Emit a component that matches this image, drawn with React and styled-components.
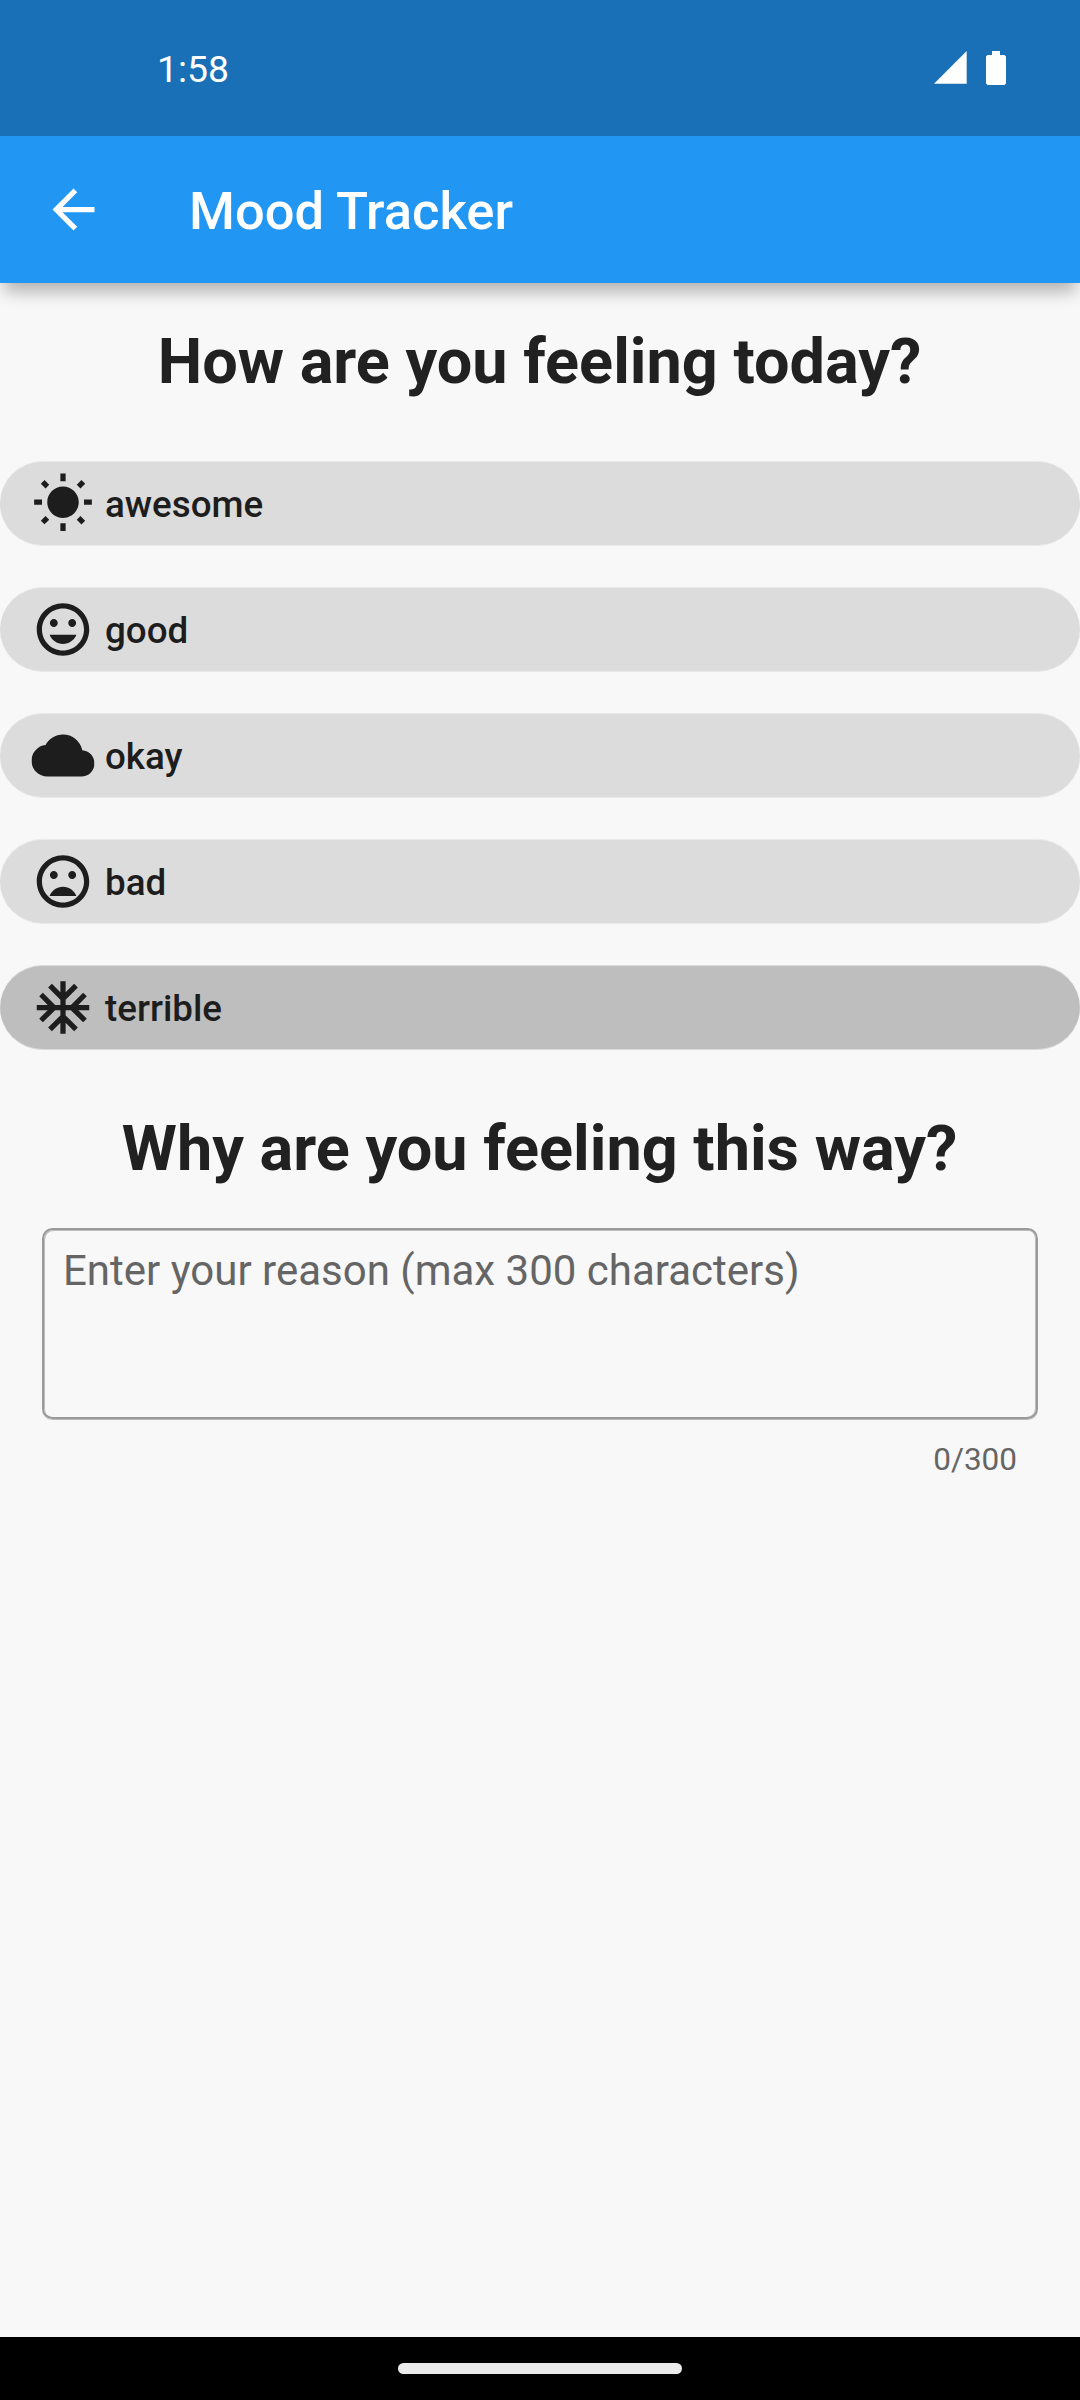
import React, { useState } from "react";
import styled, { createGlobalStyle } from "styled-components";
import {
  MdArrowBack,
  MdWbSunny,
  MdMood,
  MdCloud,
  MdMoodBad,
  MdAcUnit,
} from "react-icons/md";

const GlobalStyle = createGlobalStyle`
  * { box-sizing: border-box; }
  body { margin: 0; background: #f8f8f8; }
`;

const Screen = styled.div`
  display: flex;
  flex-direction: column;
  width: 1080px;
  height: 2400px;
  overflow: hidden;
  background: #f8f8f8;
  color: #212121;
  font-family: Roboto, "Liberation Sans", sans-serif;
`;

const StatusBar = styled.div`
  display: flex;
  flex: none;
  align-items: center;
  justify-content: space-between;
  height: 136px;
  padding: 0 74px 0 157px;
  background: #1970b6;
  color: #fff;
`;

const Clock = styled.span`
  padding-top: 1px;
  font-size: 37.3px;
  line-height: 44px;
`;

const StatusIcons = styled.div`
  display: flex;
  gap: 19px;
`;

const AppBar = styled.header`
  display: flex;
  flex: none;
  align-items: center;
  height: 147px;
  padding-left: 42px;
  gap: 84px;
  background: #2196f3;
  color: #fff;
  z-index: 1;
  box-shadow: 0 13px 16px -4px rgba(0, 0, 0, 0.28);
`;

const BackButton = styled.button`
  display: flex;
  padding: 0;
  border: 0;
  background: none;
  color: inherit;
`;

const Title = styled.h1`
  margin: 0;
  padding-top: 3px;
  font-size: 52.5px;
  font-weight: 500;
  line-height: 62px;
`;

const Content = styled.main`
  display: flex;
  flex: 1;
  flex-direction: column;
  padding-top: 42px;
`;

const Question = styled.h2`
  margin: 0;
  padding-right: 1px;
  font-size: 63px;
  font-weight: 700;
  line-height: 74px;
  text-align: center;
`;

const MoodList = styled.div`
  display: flex;
  flex-direction: column;
  gap: 41px;
  padding: 62px 0;
`;

const MoodChip = styled.button`
  display: flex;
  align-items: center;
  gap: 11px;
  height: 85px;
  padding: 0 31px;
  border: 0 solid ${(p) => (p.$selected ? "#dadada" : "#e9e9e9")};
  border-width: 1px 0;
  border-radius: 42.5px;
  background: ${(p) => (p.$selected ? "#bebebe" : "#dcdcdc")};
  color: #1d1d1d;
  font-family: inherit;
  font-size: 36.75px;
  font-weight: 500;
  line-height: 44px;
  text-align: left;

  svg {
    transform: translateX(0.5px);
  }
`;

const ChipLabel = styled.span`
  padding-top: 2px;
`;

const ReasonForm = styled.div`
  display: flex;
  flex-direction: column;
  padding: 42px 42px 0;
`;

const ReasonInput = styled.textarea`
  height: 191px;
  padding: 16px 19px;
  border: 2px solid #9a9a9a;
  border-radius: 10.5px;
  outline: 0;
  resize: none;
  background: transparent;
  box-shadow: inset 1px 1px 0 #bcbcbc, inset -1px 0 0 #bcbcbc, 0 1px 0 #bcbcbc;
  color: #212121;
  font-family: inherit;
  font-size: 42px;
  line-height: 50px;

  &::placeholder {
    color: #656565;
    opacity: 1;
  }
`;

const Counter = styled.span`
  align-self: flex-end;
  padding: 22px 21px 0 0;
  color: #656565;
  font-size: 31.5px;
  line-height: 38px;
`;

const NavigationBar = styled.div`
  display: flex;
  flex: none;
  align-items: center;
  justify-content: center;
  height: 63px;
  background: #000;
`;

const HomeHandle = styled.div`
  width: 284px;
  height: 11px;
  border-radius: 5.5px;
  background: #ebebeb;
`;

const SignalIcon = () => (
  <svg width="33" height="34" viewBox="0 0 33 34" fill="#fff">
    <path d="M0 32.7 L32.7 0 V32.7 Z" />
  </svg>
);

const BatteryIcon = () => (
  <svg width="20" height="34" viewBox="0 0 20 34" fill="#fff">
    <path d="M6 0 H14 V4 H18.5 L20 5.5 V32.5 L18.5 34 H1.5 L0 32.5 V5.5 L1.5 4 H6 Z" />
  </svg>
);

const MAX_LENGTH = 300;

const moods = [
  { label: "awesome", Icon: MdWbSunny },
  { label: "good", Icon: MdMood },
  { label: "okay", Icon: MdCloud },
  { label: "bad", Icon: MdMoodBad },
  { label: "terrible", Icon: MdAcUnit },
];

export default function App() {
  const [mood, setMood] = useState("terrible");
  const [reason, setReason] = useState("");

  return (
    <Screen>
      <GlobalStyle />
      <StatusBar>
        <Clock>1:58</Clock>
        <StatusIcons>
          <SignalIcon />
          <BatteryIcon />
        </StatusIcons>
      </StatusBar>
      <AppBar>
        <BackButton aria-label="Back">
          <MdArrowBack size={63} />
        </BackButton>
        <Title>Mood Tracker</Title>
      </AppBar>
      <Content>
        <Question>How are you feeling today?</Question>
        <MoodList>
          {moods.map(({ label, Icon }) => (
            <MoodChip
              key={label}
              $selected={label === mood}
              onClick={() => setMood(label)}
            >
              <Icon size={63} />
              <ChipLabel>{label}</ChipLabel>
            </MoodChip>
          ))}
        </MoodList>
        <Question>Why are you feeling this way?</Question>
        <ReasonForm>
          <ReasonInput
            maxLength={MAX_LENGTH}
            placeholder="Enter your reason (max 300 characters)"
            value={reason}
            onChange={(e) => setReason(e.target.value)}
          />
          <Counter>{`${reason.length}/${MAX_LENGTH}`}</Counter>
        </ReasonForm>
      </Content>
      <NavigationBar>
        <HomeHandle />
      </NavigationBar>
    </Screen>
  );
}
